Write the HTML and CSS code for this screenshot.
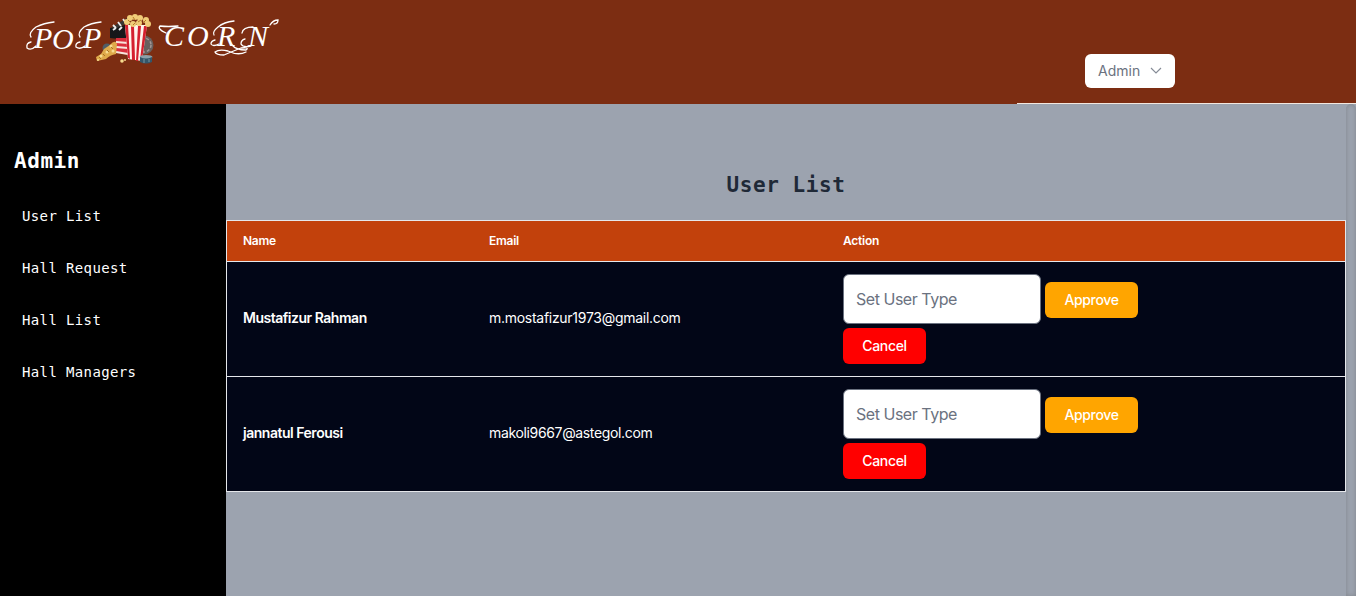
FILE: index.html
```html
<!DOCTYPE html>
<html lang="en">
<head>
<meta charset="utf-8">
<title>Pop Corn - User List</title>
<link rel="stylesheet" href="styles.css">
</head>
<body>
<header class="topbar">
  <svg class="logo" width="300" height="80" viewBox="0 0 300 80" role="img" aria-label="Pop Corn">
    <g class="logo-text">
      <text x="34" y="48">P</text><text x="52" y="49">O</text><text x="83" y="48">P</text>
      <text x="164" y="46">C</text><text x="187" y="46">O</text><text x="217" y="46">R</text><text x="248" y="46">N</text>
    </g>
    <g class="swash">
      <path d="M54 22Q44 23 36 27Q28 33 31 37M36 46Q31 51 27 48Q26 43 31 42"/>
      <path d="M101 22Q91 23 84 27Q77 33 80 37M85 46Q80 50 76 47Q75 43 80 42"/>
      <path d="M166 33Q157 29 160 26Q168 27 178 26"/>
      <path d="M234 21Q224 22 218 27Q212 32 214 35M219 44Q213 47 211 44Q211 41 215 40"/>
      <path d="M232 45Q236 50 246 50Q250 47 241 48Q231 52 224 55Q216 55 215 52Q219 49 228 51Q238 56 246 52"/>
      <path d="M251 46Q243 48 241 44Q241 40 245 39M253 27Q243 27 242 33M270 25Q273 20 278 20Q278 24 274 24"/>
    </g>
    <g>
      <circle cx="144" cy="45" r="9.5" fill="#68605e"/><circle cx="144" cy="45" r="7" fill="none" stroke="#a29796" stroke-width="1.5" stroke-dasharray="3 2"/>
      <circle cx="107" cy="48" r="4.5" fill="#505d67"/>
      <path d="M110 28l15-3 3 15-18-2z" fill="#171719"/>
      <path d="M112 27l15-9 2 4-16 8z" fill="#3a3633"/>
      <path d="M113 25l3 3m2-6 3 4m2-7 3 4M113 30l3-2m3 2 3-3" stroke="#eee" stroke-width="1.8"/>
      <path d="M116 38h13v17l-14-3z" fill="#d92e3c"/><path d="M116 42l12 1m-12 4 12 1m-12 4 12 2" stroke="#f7e6dd" stroke-width="2"/>
      <path d="M110 45q5-6 7-1l-1 10q-6 1-10 5l-9 2-1-4 5-3 3-5z" fill="#dfaa4a"/>
      <path d="M125 25h22l-5 36-14-2z" fill="#fff4ed"/>
      <path d="M125 25h3l2 34-2-1zm6 1h3l1 34h-3zm7 0h3l-3 35h-2zm6 0h3l-5 34h-2z" fill="#d5202f"/>
      <g fill="#f0cd78"><circle cx="127" cy="22" r="3"/><circle cx="130" cy="18" r="3"/><circle cx="135" cy="17" r="3"/><circle cx="140" cy="18" r="3"/><circle cx="146" cy="20" r="3"/><circle cx="148" cy="24" r="3"/><circle cx="133" cy="24" r="3"/><circle cx="139" cy="23" r="3"/></g>
      <path d="M128 20l2 2m3-5 2 3m3 2 3-2m2 3 3-3M133 25l2-2" stroke="#b57c27"/>
      <g fill="#f7db8f"><circle cx="111" cy="46" r="1.5"/><circle cx="107" cy="52" r="1.5"/><circle cx="101" cy="56" r="1.5"/><circle cx="113" cy="51" r="1.5"/><circle cx="98" cy="60" r="1"/><circle cx="122" cy="61" r="1.8"/><circle cx="125" cy="60" r="1"/></g>
      <path d="M107 50l2 2m-6 2 2 2m-6 1 2 2m10-12 2 2" stroke="#a87225"/>
      <ellipse cx="146" cy="57" rx="6.5" ry="2" fill="#8ba0a9"/><path d="M140 57q6 3 12 0v5q-6 3-12 0z" fill="#345669"/><path d="M144 59v4m5-4v3" stroke="#7895a1"/>
    </g>
  </svg>
  <div class="account">
    <button class="account-button"><span>Admin</span>
      <svg width="12" height="8" viewBox="0 0 12 8"><path d="M1 1l5 5 5-5" fill="none" stroke="#858b96" stroke-width="1.15"/></svg>
    </button>
  </div>
</header>
<div class="layout">
  <nav class="sidebar">
    <h2>Admin</h2>
    <a>User List</a><a>Hall Request</a><a>Hall List</a><a>Hall Managers</a>
  </nav>
  <main class="content">
    <h1>User List</h1>
    <div class="table">
      <div class="row head"><span>Name</span><span>Email</span><span>Action</span></div>
      <div class="row">
        <span class="name">Mustafizur Rahman</span><span class="email email-one">m.mostafizur1973@gmail.com</span>
        <div class="actions"><input placeholder="Set User Type"><button class="approve">Approve</button><button class="cancel">Cancel</button></div>
      </div>
      <div class="row">
        <span class="name">jannatul Ferousi</span><span class="email email-two">makoli9667@astegol.com</span>
        <div class="actions"><input placeholder="Set User Type"><button class="approve">Approve</button><button class="cancel">Cancel</button></div>
      </div>
    </div>
  </main>
  <div class="scroll-track"></div>
</div>
</body>
</html>
```
FILE: styles.css
```css
* { box-sizing: border-box; }
body { margin: 0; height: 596px; overflow: hidden; font-family: Inter, "Liberation Sans", sans-serif; background: #9ca3af; }
button, input { font-family: inherit; margin: 0; }
.topbar { height: 104px; background: #7c2d12; display: flex; justify-content: space-between; }
.logo { display: block; }
.logo-text { fill: #fff; font: italic 30px "Liberation Serif", serif; }
.swash { fill: none; stroke: #fff; stroke-width: 1.3; stroke-linecap: round; }
.account { width: 339px; padding: 54px 0 0 68px; border-bottom: 1px solid #f3e8e0; }
.account-button { width: 90px; height: 34px; padding: 0 13px; display: flex; align-items: center; justify-content: space-between; border: 0; border-radius: 6px; background: #fff; color: #6b7280; font-size: 14px; }
.account-button span { padding-bottom: 2px; }
.layout { display: flex; height: 492px; }
.sidebar { width: 226px; background: #000; color: #fff; padding: 41px 14px; font-family: "DejaVu Sans Mono", monospace; }
.sidebar h2 { margin: 0 0 29px; font-size: 21px; line-height: 32px; letter-spacing: .56px; }
.sidebar a { display: block; height: 52px; padding-left: 8px; font-size: 14px; line-height: 20px; letter-spacing: .37px; }
.content { width: 1120px; padding-top: 65px; }
.content h1 { margin: 0 0 19px; text-align: center; color: #1f2937; font: bold 21px/32px "DejaVu Sans Mono", monospace; letter-spacing: .56px; }
.table { border: 1px solid #e5e7eb; background: #020617; color: #fff; }
.row { display: grid; grid-template-columns: 246px 354px 1fr; align-items: center; padding-left: 16px; height: 115px; }
.row + .row { border-top: 1px solid #e5e7eb; }
.row.head { height: 40px; background: #c2410c; font-size: 12px; font-weight: 600; letter-spacing: -.25px; }
.row.head span { padding-bottom: 2px; }
.name, .email { padding-bottom: 3px; font-size: 14px; }
.name { font-weight: 600; letter-spacing: -.48px; }
.email-one { letter-spacing: -.28px; }
.email-two { letter-spacing: -.35px; }
.actions { width: 322px; display: flex; flex-wrap: wrap; align-items: center; gap: 4px; }
.actions input { width: 198px; height: 50px; padding: 0 12px 1px; border: 1px solid #6b7280; border-radius: 6px; background: #fff; font-size: 16px; letter-spacing: -.47px; }
.actions input::placeholder { color: #6b7280; opacity: 1; }
.actions button { height: 36px; padding: 0 0 2px; border: 0; border-radius: 6px; color: #fff; font-size: 14px; font-weight: 500; letter-spacing: -.35px; }
.actions .approve { width: 93px; margin-top: 2px; background: #ffa500; }
.actions .cancel { width: 83px; background: #f00; }
.scroll-track { width: 10px; border-radius: 10px 10px 0 0; background: #9ca3af; box-shadow: inset 0 0 5px rgba(100, 100, 100, .45); }
```
